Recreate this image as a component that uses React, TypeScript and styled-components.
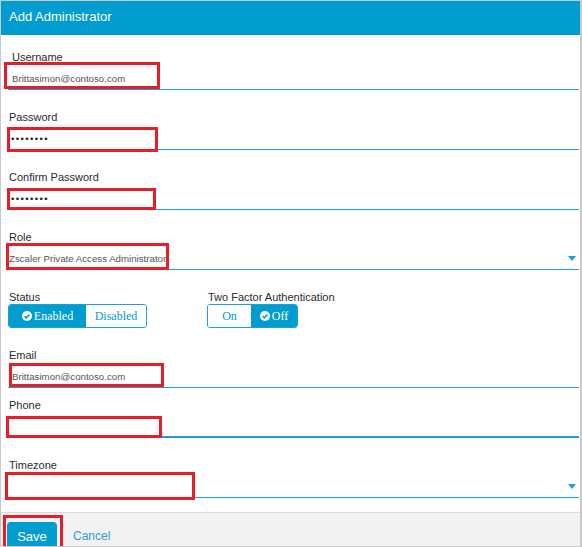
import React from "react";
import styled, { createGlobalStyle } from "styled-components";

const GlobalStyle = createGlobalStyle`
  html, body {
    margin: 0;
    padding: 0;
    background: #ffffff;
  }
  body {
    font-family: "Liberation Sans", Arial, sans-serif;
  }
`;

const BLUE = "#019dd0";
const LINE = "#1e9fd3";
const RED = "#e61e27";

const Panel = styled.div`
  width: 582px;
  height: 547px;
  box-sizing: border-box;
  border: 1px solid #c9c9c9;
  border-right-width: 2px;
  background: #fff;
  overflow: hidden;
  display: flex;
  flex-direction: column;
`;

const Header = styled.div`
  height: 34px;
  flex-shrink: 0;
  background: ${BLUE};
  color: #fff;
  font-size: 13px;
  line-height: 32px;
  padding: 0 8px;
`;

const Form = styled.div`
  flex: 1;
  padding: 16px 1px 14px 7px;
  display: flex;
  flex-direction: column;
`;

const Field = styled.div<{ $after?: number }>`
  display: flex;
  flex-direction: column;
  margin-bottom: ${(p) => (p.$after ?? 21)}px;
`;

const Label = styled.div<{ $indent?: number }>`
  font-size: 11px;
  line-height: 13px;
  height: 13px;
  color: #2b2b2b;
  padding-left: ${(p) => p.$indent ?? 1}px;
`;

const InputRow = styled.div<{ $thick?: boolean; $pad?: number }>`
  position: relative;
  height: 26px;
  box-sizing: border-box;
  border-bottom: ${(p) => (p.$thick ? 2 : 1)}px solid ${LINE};
  display: flex;
  align-items: flex-end;
  justify-content: space-between;
  padding: 0 3px 4px ${(p) => p.$pad ?? 4}px;
`;

const Value = styled.span`
  font-size: 9.7px;
  line-height: 12px;
  color: #555;
  white-space: nowrap;
`;

const Dots = styled.span`
  font-size: 9.6px;
  line-height: 12px;
  letter-spacing: 1.4px;
  color: #222;
`;

// red annotation boxes drawn over the screenshot fields
const Highlight = styled.span<{ $x: number; $y: number; $w: number; $h: number }>`
  position: absolute;
  left: ${(p) => p.$x}px;
  top: ${(p) => p.$y}px;
  width: ${(p) => p.$w}px;
  height: ${(p) => p.$h}px;
  box-sizing: border-box;
  border: 3px solid ${RED};
  pointer-events: none;
`;

const Caret = styled.svg`
  display: block;
  margin-bottom: 4px;
`;

const SwitchRow = styled.div`
  display: grid;
  grid-template-columns: 199px auto;
  margin-bottom: 21px;
`;

const SwitchGroup = styled.div`
  display: flex;
  flex-direction: column;
  align-items: flex-start;
`;

const Toggle = styled.div`
  display: inline-flex;
  height: 24px;
  box-sizing: border-box;
  border: 1px solid ${LINE};
  border-radius: 3px;
  overflow: hidden;
`;

const Segment = styled.div<{ $on?: boolean; $w: number }>`
  width: ${(p) => p.$w}px;
  display: flex;
  align-items: center;
  justify-content: center;
  gap: 2px;
  background: ${(p) => (p.$on ? BLUE : "#fff")};
  color: ${(p) => (p.$on ? "#fff" : BLUE)};
  font-family: "Liberation Serif", "Times New Roman", serif;
  font-size: 12px;
`;

const Footer = styled.div`
  height: 33px;
  flex-shrink: 0;
  border-top: 1px solid #dcdcdc;
  background: #f2f2f2;
  padding: 9px 0 0 6px;
  display: flex;
  align-items: flex-start;
  gap: 16px;
  overflow: hidden;
`;

const SaveWrap = styled.div`
  position: relative;
`;

const SaveButton = styled.button`
  width: 50px;
  height: 30px;
  border: none;
  border-radius: 4px;
  background: ${BLUE};
  color: #fff;
  font-family: "Liberation Sans", Arial, sans-serif;
  font-size: 13px;
  padding: 0 0 4px;
  line-height: 30px;
`;

const CancelLink = styled.span`
  color: #2aa1d6;
  font-size: 12px;
  line-height: 28px;
`;

const CheckCircle = ({ color }: { color: string }) => (
  <svg width="10" height="10" viewBox="0 0 10 10">
    <circle cx="5" cy="5" r="5" fill="#fff" />
    <path d="M2.6 5.1 L4.3 6.8 L7.4 3.6" fill="none" stroke={color} strokeWidth="1.6" />
  </svg>
);

const DownCaret = () => (
  <Caret width="8" height="5" viewBox="0 0 8 5">
    <path d="M0 0 H8 L4 5 Z" fill={LINE} />
  </Caret>
);

type Box = { x: number; y: number; w: number; h: number };

const TextField = ({
  label,
  children,
  box,
  after,
  indent,
  thick,
  pad,
  select,
}: {
  label: string;
  children?: React.ReactNode;
  box: Box;
  after?: number;
  indent?: number;
  thick?: boolean;
  pad?: number;
  select?: boolean;
}) => (
  <Field $after={after}>
    <Label $indent={indent}>{label}</Label>
    <InputRow $thick={thick} $pad={pad}>
      {children ?? <span />}
      {select && <DownCaret />}
      <Highlight $x={box.x} $y={box.y} $w={box.w} $h={box.h} />
    </InputRow>
  </Field>
);

export default function App() {
  return (
    <>
      <GlobalStyle />
      <Panel>
        <Header>Add Administrator</Header>
        <Form>
          <TextField label="Username" indent={4} box={{ x: -4, y: -2, w: 156, h: 27 }}>
            <Value>Brittasimon@contoso.com</Value>
          </TextField>
          <TextField label="Password" box={{ x: -1, y: 3, w: 151, h: 25 }} pad={3}>
            <Dots>••••••••</Dots>
          </TextField>
          <TextField label="Confirm Password" box={{ x: -1, y: 4, w: 149, h: 22 }} pad={3}>
            <Dots>••••••••</Dots>
          </TextField>
          <TextField label="Role" box={{ x: -2, y: -1, w: 163, h: 27 }} pad={1} select>
            <Value>Zscaler Private Access Administrator</Value>
          </TextField>

          <SwitchRow>
            <SwitchGroup>
              <Label>Status</Label>
              <Toggle>
                <Segment $on $w={77}>
                  <CheckCircle color={BLUE} />
                  Enabled
                </Segment>
                <Segment $w={60}>Disabled</Segment>
              </Toggle>
            </SwitchGroup>
            <SwitchGroup>
              <Label>Two Factor Authentication</Label>
              <Toggle>
                <Segment $w={43}>On</Segment>
                <Segment $on $w={46}>
                  <CheckCircle color={BLUE} />
                  Off
                </Segment>
              </Toggle>
            </SwitchGroup>
          </SwitchRow>

          <TextField label="Email" box={{ x: 1, y: 1, w: 155, h: 24 }} after={11}>
            <Value>Brittasimon@contoso.com</Value>
          </TextField>
          <TextField label="Phone" box={{ x: -2, y: 4, w: 156, h: 22 }} thick />
          <TextField label="Timezone" box={{ x: -3, y: 0, w: 190, h: 28 }} after={0} select />
        </Form>
        <Footer>
          <SaveWrap>
            <SaveButton>Save</SaveButton>
            <Highlight $x={-4} $y={-7} $w={60} $h={45} />
          </SaveWrap>
          <CancelLink>Cancel</CancelLink>
        </Footer>
      </Panel>
    </>
  );
}
